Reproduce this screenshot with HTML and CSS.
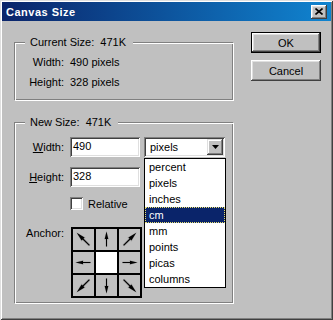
FILE: index.html
```html
<!DOCTYPE html>
<html>
<head>
<meta charset="UTF-8">
<title>Canvas Size</title>
<link rel="stylesheet" href="styles.css">
</head>
<body>
<svg class="defs" width="0" height="0">
    <defs>
        <g id="arrow">
            <path d="M10.5 9 V17.5" stroke="#9a9a9a" stroke-width="2.2" fill="none" opacity="0.6"/>
            <polygon points="10.5,2 8,10.6 13,10.6" fill="#9a9a9a" opacity="0.6"/>
            <path d="M10.5 9 V17.5" stroke="#000" stroke-width="1" fill="none"/>
            <polygon points="10.5,2.5 8.7,10 12.3,10" fill="#000"/>
        </g>
    </defs>
</svg>
<div class="window">
    <div class="titlebar">
        <span class="title">Canvas Size</span>
        <span class="close">
            <svg width="8" height="7" viewBox="0 0 8 7"><path d="M0.5 0.5 L7.5 6.5 M7.5 0.5 L0.5 6.5" stroke="#000" stroke-width="1.6"/></svg>
        </span>
    </div>
    <div class="content">
        <div class="left">
            <div class="group current">
                <div class="legend">Current Size:&nbsp; 471K</div>
                <div class="info">
                    <span class="lbl">Width:</span><span>490 pixels</span>
                    <span class="lbl">Height:</span><span>328 pixels</span>
                </div>
            </div>
            <div class="group newsize">
                <div class="legend">New Size:&nbsp; 471K</div>
                <div class="form">
                    <div class="row">
                        <span class="lbl"><u>W</u>idth:</span>
                        <div class="field">490</div>
                        <div class="select">
                            <span class="value">pixels</span>
                            <span class="drop">
                                <svg width="7" height="4" viewBox="0 0 7 4"><polygon points="0,0 7,0 3.5,4" fill="#000"/></svg>
                            </span>
                            <ul class="list">
                                <li>percent</li>
                                <li>pixels</li>
                                <li>inches</li>
                                <li class="sel">cm</li>
                                <li>mm</li>
                                <li>points</li>
                                <li>picas</li>
                                <li>columns</li>
                            </ul>
                        </div>
                    </div>
                    <div class="row">
                        <span class="lbl"><u>H</u>eight:</span>
                        <div class="field">328</div>
                    </div>
                    <div class="row check">
                        <span class="box"></span>
                        <span>Relative</span>
                    </div>
                    <div class="row anchor">
                        <span class="lbl">Anchor:</span>
                        <div class="grid">
                            <div class="cell"><svg viewBox="0 0 21 21"><use href="#arrow" transform="rotate(-45 10.5 10.5) translate(10.5 10.5) scale(1.2) translate(-10.5 -10.5)"/></svg></div>
                            <div class="cell"><svg viewBox="0 0 21 21"><use href="#arrow"/></svg></div>
                            <div class="cell"><svg viewBox="0 0 21 21"><use href="#arrow" transform="rotate(45 10.5 10.5) translate(10.5 10.5) scale(1.2) translate(-10.5 -10.5)"/></svg></div>
                            <div class="cell"><svg viewBox="0 0 21 21"><use href="#arrow" transform="rotate(-90 10.5 10.5)"/></svg></div>
                            <div class="cell center"></div>
                            <div class="cell"><svg viewBox="0 0 21 21"><use href="#arrow" transform="rotate(90 10.5 10.5)"/></svg></div>
                            <div class="cell"><svg viewBox="0 0 21 21"><use href="#arrow" transform="rotate(-135 10.5 10.5) translate(10.5 10.5) scale(1.2) translate(-10.5 -10.5)"/></svg></div>
                            <div class="cell"><svg viewBox="0 0 21 21"><use href="#arrow" transform="rotate(180 10.5 10.5)"/></svg></div>
                            <div class="cell"><svg viewBox="0 0 21 21"><use href="#arrow" transform="rotate(135 10.5 10.5) translate(10.5 10.5) scale(1.2) translate(-10.5 -10.5)"/></svg></div>
                        </div>
                    </div>
                </div>
            </div>
        </div>
        <div class="buttons">
            <div class="btn default">OK</div>
            <div class="btn">Cancel</div>
        </div>
    </div>
</div>
</body>
</html>
```
FILE: styles.css
```css
/* classic dialog, 333 x 320 */
html, body{margin: 0; padding: 0}
body{font: 11px "Liberation Sans", Arial, sans-serif; color: #000; background: #c0c0c0;}
.defs{position: absolute; width: 0; height: 0;}

.window{
    width: 333px;
    height: 320px;
    box-sizing: border-box;
    padding: 2px;
    background: #c0c0c0;
    box-shadow: inset 1px 1px #dfdfdf, inset -1px -1px #404040,
                inset 2px 2px #fff, inset -2px -2px #808080;
}
.titlebar{
    height: 19px;
    display: flex;
    align-items: center;
    padding-left: 4px;
    background: linear-gradient(to right, #0a246a, #1084d0);
    color: #fff;
}
.title{font-weight: bold; letter-spacing: 0.5px;}
.close{
    margin-left: auto;
    margin-right: 4px;
    width: 16px;
    height: 14px;
    display: flex;
    align-items: center;
    justify-content: center;
    background: #c0c0c0;
    box-shadow: inset -1px -1px #404040, inset 1px 1px #fff,
                inset -2px -2px #808080, inset 2px 2px #dfdfdf;
}

.content{display: flex; padding: 11px 0 0 12px;}
.left{width: 220px; margin-top: 10px;}

.group{
    box-sizing: border-box;
    border: 1px solid;
    border-color: #808080 #fff #fff #808080;
    box-shadow: inset 1px 1px #fff, inset -1px -1px #808080;
}
.current{height: 59px;}
.newsize{height: 182px; margin-top: 21px;}
.legend{
    display: table;
    margin: -7px 0 0 10px;
    padding: 0 7px 0 5px;
    line-height: 13px;
    background: #c0c0c0;
}

.info{
    display: grid;
    grid-template-columns: 49px auto;
    column-gap: 6px;
    line-height: 20px;
    margin-top: 3px;
}
.lbl{text-align: right; width: 49px;}

.form{margin-top: 8px;}
.row{display: flex; align-items: center; height: 20px; margin-top: 10px;}
.row:first-child{margin-top: 0;}
.row .lbl{margin-right: 6px;}

.field, .select, .box{
    box-sizing: border-box;
    background: #fff;
    box-shadow: inset 1px 1px #808080, inset -1px -1px #fff,
                inset 2px 2px #404040, inset -2px -2px #dfdfdf;
}
.field{width: 70px; height: 20px; padding-left: 3px; line-height: 19px;}
.select{
    position: relative;
    width: 81px;
    height: 20px;
    margin-left: 4px;
    display: flex;
    align-items: center;
}
.select .value{padding-left: 6px; flex: 1;}
.drop{
    width: 16px;
    height: 16px;
    margin-right: 2px;
    display: flex;
    align-items: center;
    justify-content: center;
    background: #c0c0c0;
    box-shadow: inset -1px -1px #404040, inset 1px 1px #dfdfdf,
                inset -2px -2px #808080, inset 2px 2px #fff;
}
.list{
    position: absolute;
    top: 21px;
    left: 0;
    width: 82px;
    box-sizing: border-box;
    margin: 0;
    padding: 0;
    list-style: none;
    background: #fff;
    border: 1px solid #000;
    z-index: 2;
}
.list li{height: 16px; line-height: 16px; padding-left: 4px;}
.list .sel{
    background: #0a246a;
    color: #fff;
    outline: 1px dotted #e8e070;
    outline-offset: -1px;
}

.check{height: 13px; padding-left: 55px;}
.box{width: 13px; height: 13px; margin-right: 5px;}

.anchor{height: auto; align-items: flex-start; margin-top: 17px;}
.anchor .lbl{line-height: 13px; margin-right: 7px;}
.grid{
    display: grid;
    grid-template-columns: repeat(3, 21px);
    grid-auto-rows: 21px;
    gap: 2px;
    padding: 2px;
    background: #000;
}
.cell{background: #c0c0c0;}
.cell svg{display: block; width: 21px; height: 21px; overflow: visible;}
.cell.center{background: #fff;}

.buttons{margin-left: 17px;}
.btn{
    width: 70px;
    height: 21px;
    box-sizing: border-box;
    display: flex;
    align-items: center;
    justify-content: center;
    margin-bottom: 7px;
    background: #c0c0c0;
    box-shadow: inset -1px -1px #404040, inset 1px 1px #fff,
                inset -2px -2px #808080, inset 2px 2px #dfdfdf;
}
.btn.default{border: 1px solid #000;}
```
